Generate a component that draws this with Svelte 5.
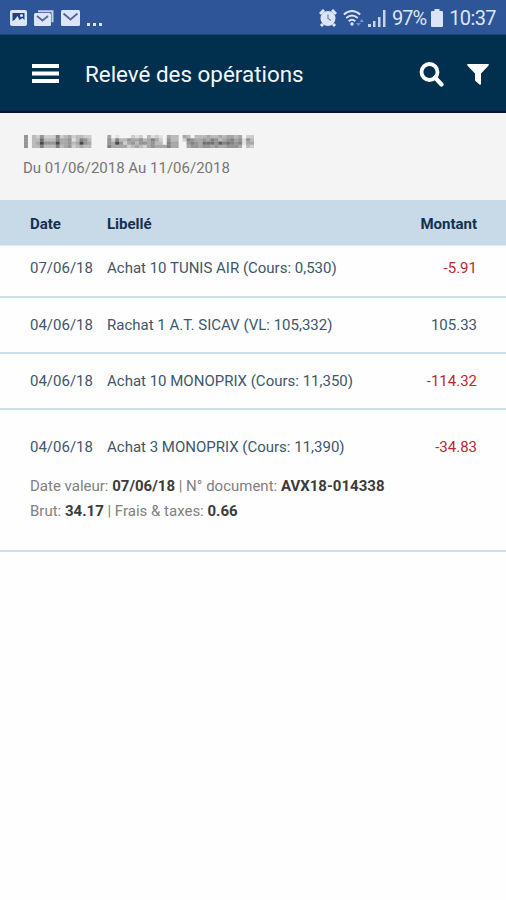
<script lang="ts">
  type Operation = {
    date: string;
    label: string;
    amount: string;
    details?: {
      valueDate: string;
      document: string;
      gross: string;
      fees: string;
    };
  };

  const operations: Operation[] = [
    { date: "07/06/18", label: "Achat 10 TUNIS AIR (Cours: 0,530)", amount: "-5.91" },
    { date: "04/06/18", label: "Rachat 1 A.T. SICAV (VL: 105,332)", amount: "105.33" },
    { date: "04/06/18", label: "Achat 10 MONOPRIX (Cours: 11,350)", amount: "-114.32" },
    {
      date: "04/06/18",
      label: "Achat 3 MONOPRIX (Cours: 11,390)",
      amount: "-34.83",
      details: {
        valueDate: "07/06/18",
        document: "AVX18-014338",
        gross: "34.17",
        fees: "0.66",
      },
    },
  ];

  // masked account holder: one digit per cell, 0 = clear, 9 = darkest
  const mask = [
    "5032522262342332200004010002120312104330430333433434434022",
    "5033733364451365300005263354453464205330265445465345645153",
    "5034955594453495400005495245355453306440056547775867656144",
    "5033633363452343300006444423432454446440045545545445554032",
  ];
</script>

<div class="screen">
  <div class="status">
    <div class="group">
      <svg class="notif" width="17" height="16" viewBox="0 0 17 16">
        <rect width="17" height="16" rx="2" fill="#dce5f5" />
        <path d="M2.5 3h12v7l-2-2-3 2-2-4-3 4-2 1z" fill="#1d4380" />
        <circle cx="11.5" cy="5.5" r="1.5" fill="#dce5f5" />
      </svg>
      <svg class="notif" width="20" height="16" viewBox="0 0 20 16">
        <path d="M4 1.2h14.500v11" fill="none" stroke="#c5d2ea" stroke-width="2" />
        <rect y="3" width="17" height="13" rx="1.5" fill="#dce5f5" />
        <path d="M3 6l5.500 4.500L14 6" fill="none" stroke="#56699a" stroke-width="1.8" />
      </svg>
      <svg class="notif" width="19" height="16" viewBox="0 0 19 16">
        <rect width="19" height="16" rx="1.5" fill="#dce5f5" />
        <path d="M2.500 3.500l7 6 7-6" fill="none" stroke="#56699a" stroke-width="2" />
      </svg>
      <svg width="15" height="16" viewBox="0 0 15 16">
        <path d="M0 13h3v3H0zM6 13h3v3H6zM12 13h3v3h-3z" fill="#dce5f5" />
      </svg>
    </div>
    <div class="group">
      <svg width="18" height="18" viewBox="0 0 18 18">
        <path d="M1 5l4-4M17 5l-4-4M4 15l-2 2M14 15l2 2" stroke="#dce5f5" stroke-width="3" />
        <circle cx="9" cy="9.5" r="7.5" fill="#dce5f5" />
        <path d="M9 5.500v4l3 2" fill="none" stroke="#6d86b7" stroke-width="1.3" />
      </svg>
      <svg class="wifi" width="22" height="18" viewBox="0 0 22 18">
        <g fill="none" stroke="#dce5f5" stroke-width="1.8">
          <path d="M.8 5.500q8.200-7 16.400 0" />
          <path d="M3.200 9q5.800-5 11.600 0" />
          <path d="M5.700 12.200q3.300-2.800 6.600 0" />
        </g>
        <circle cx="9" cy="15" r="1.7" fill="#dce5f5" />
        <path d="M13 14l2.500 3 2.500-3zM16.500 13l2.200-3 2.300 3z" fill="#7892c4" />
      </svg>
      <svg class="signal" width="18" height="18" viewBox="0 0 18 18">
        <path d="M0 15h3v3H0zM5 12h2.500v6H5zM10 8h2.500v10H10zM15 1h2.500v17H15z" fill="#c8d4ea" />
      </svg>
      <span class="percent">97%</span>
      <svg class="battery" width="12" height="18" viewBox="0 0 12 18">
        <path d="M3.500 0h5v2H11q1 0 1 1v14q0 1-1 1H1q-1 0-1-1V3q0-1 1-1h2.500z" fill="#dce5f5" />
      </svg>
      <span class="clock">10:37</span>
    </div>
  </div>

  <header>
    <svg width="27" height="20" viewBox="0 0 27 20">
      <path d="M0 0h27v4H0zM0 7.500h27v4H0zM0 15h27v4H0z" fill="#fff" />
    </svg>
    <h1>Relevé des opérations</h1>
    <svg class="search" width="25" height="25" viewBox="0 0 25 25">
      <circle cx="10.5" cy="10" r="8" fill="none" stroke="#fff" stroke-width="3.8" />
      <path d="M16 15.500l6.500 7" stroke="#fff" stroke-width="4.2" stroke-linecap="round" />
    </svg>
    <svg width="22" height="21" viewBox="0 0 22 21">
      <path d="M.5 0h21q.8 1-.3 2L14 9.500V20q-.3 1.200-1.500.5L8.500 17q-.5-.5-.5-1V9.500L.8 2Q-.3 1 .5 0z" fill="#fff" />
    </svg>
  </header>

  <div class="account">
    <svg class="mask" width="230" height="13" viewBox="0 0 58 4" preserveAspectRatio="none">
      {#each mask as line, y}
        {#each line.split("") as level, x}
          <rect {x} {y} width="1" height="1" fill="#222" opacity={Number(level) / 11} />
        {/each}
      {/each}
    </svg>
    <p>Du 01/06/2018 Au 11/06/2018</p>
  </div>

  <div class="row head">
    <span>Date</span>
    <span>Libellé</span>
    <span>Montant</span>
  </div>

  {#each operations as op}
    <div class="operation" class:open={op.details}>
      <div class="row">
        <span>{op.date}</span>
        <span>{op.label}</span>
        <span class:negative={op.amount.startsWith("-")}>{op.amount}</span>
      </div>
      {#if op.details}
        <div class="details">
          <p>Date valeur: <b>{op.details.valueDate}</b> | N° document: <b>{op.details.document}</b></p>
          <p>Brut: <b>{op.details.gross}</b> | Frais &amp; taxes: <b>{op.details.fees}</b></p>
        </div>
      {/if}
    </div>
  {/each}
</div>

<style>
  :global(body) {
    background: #fefefe;
  }
  .screen {
    min-height: 900px;
    font-family: Roboto, sans-serif;
    font-size: 15px;
    color: #40566a;
  }
  p,
  h1 {
    margin: 0;
  }
  svg {
    display: block;
    flex-shrink: 0;
  }
  .status {
    box-sizing: border-box;
    height: 35px;
    padding: 1px 10px 0;
    display: flex;
    align-items: center;
    justify-content: space-between;
    background: #2e5598;
    border-bottom: 1px solid #1a4371;
    color: #dce5f5;
    font-size: 20px;
  }
  .group {
    display: flex;
    align-items: center;
  }
  .notif {
    margin-right: 7px;
  }
  .wifi {
    margin-left: 6px;
  }
  .signal {
    margin: 0 6px 0 3px;
  }
  .percent {
    letter-spacing: -1px;
  }
  .battery {
    margin: 0 6px 0 5px;
  }
  .clock {
    letter-spacing: -0.6px;
  }
  header {
    box-sizing: border-box;
    height: 78px;
    padding: 2px 17px 0 32px;
    display: flex;
    align-items: center;
    background: #01304e;
    border-bottom: 2px solid #061438;
  }
  h1 {
    flex: 1;
    margin-left: 26px;
    color: #f4f7fa;
    font-size: 22.4px;
    font-weight: 400;
  }
  .search {
    margin-right: 23px;
  }
  .account {
    box-sizing: border-box;
    height: 87px;
    padding: 22px 24px 0 23px;
    background: #f4f4f4;
  }
  .account p {
    margin-top: 11px;
    color: #777;
    line-height: 18px;
  }
  .mask {
    margin-left: 1px;
    filter: blur(0.5px);
  }
  .row {
    display: grid;
    grid-template-columns: 77px 1fr auto;
    padding: 0 29px 0 30px;
    line-height: 20px;
  }
  .head {
    height: 46px;
    align-items: center;
    box-sizing: border-box;
    padding-top: 3px;
    background: #c8d9e7;
    border-bottom: 1px solid #e3e6ea;
    color: #12304f;
    font-weight: 700;
  }
  .operation {
    box-sizing: border-box;
    height: 56px;
    padding-top: 17px;
    border-bottom: 2px solid #cddfed;
  }
  .head + .operation {
    height: 52px;
    padding-top: 12px;
  }
  .operation.open {
    height: 142px;
    padding-top: 27px;
  }
  .negative {
    color: #bd2830;
  }
  .details {
    padding: 17px 30px 0;
    color: #808080;
    line-height: 25px;
  }
  .details b {
    color: #3b3b3b;
    font-weight: 700;
  }
</style>
